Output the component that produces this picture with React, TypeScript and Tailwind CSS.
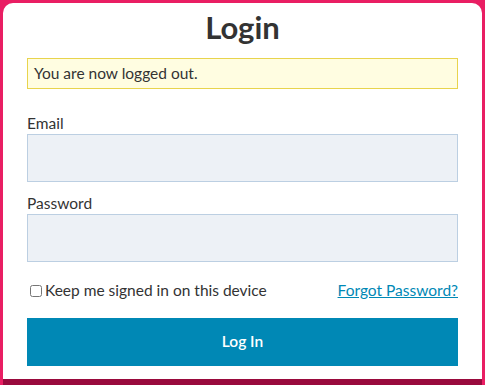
export default function App() {
  return (
    <div className="min-h-[385px] bg-[#e91e63] px-[3px] pt-[3px] font-['Lato','Liberation_Sans',sans-serif] text-[#333]">
      <div className="rounded-t-[10px] bg-white px-6 pb-[13px]">
        <h1 className="pt-[4px] text-center text-[31px] leading-[40px] font-bold text-[#333]">Login</h1>
        <div className="mt-[11px] flex h-[31px] items-center border border-[#e8d44d] bg-[#fffde1] px-[6px] text-[15.5px] leading-[19px]">
          You are now logged out.
        </div>
        <label className="mt-[25px] block text-[15.5px] leading-[19px]">Email</label>
        <input type="email" className="mt-[1px] block h-[48px] w-full border border-[#bccfe2] bg-[#edf1f6]" />
        <label className="mt-[12px] block text-[15.5px] leading-[19px]">Password</label>
        <input type="password" className="mt-[1px] block h-[48px] w-full border border-[#bccfe2] bg-[#edf1f6]" />
        <div className="mt-[19px] flex items-center justify-between text-[15.5px] leading-[19px]">
          <label className="flex items-center pl-[3px]">
            <input type="checkbox" className="mr-[3px] h-[12px] w-[12px]" />
            Keep me signed in on this device
          </label>
          <a href="#" className="text-[#0088b5] underline">Forgot Password?</a>
        </div>
        <button className="mt-[18px] block h-[48px] w-full bg-[#0088b5] text-[15.5px] font-semibold text-white">
          Log In
        </button>
      </div>
      <div className="h-[6px] bg-[#990a3d]" />
    </div>
  );
}
